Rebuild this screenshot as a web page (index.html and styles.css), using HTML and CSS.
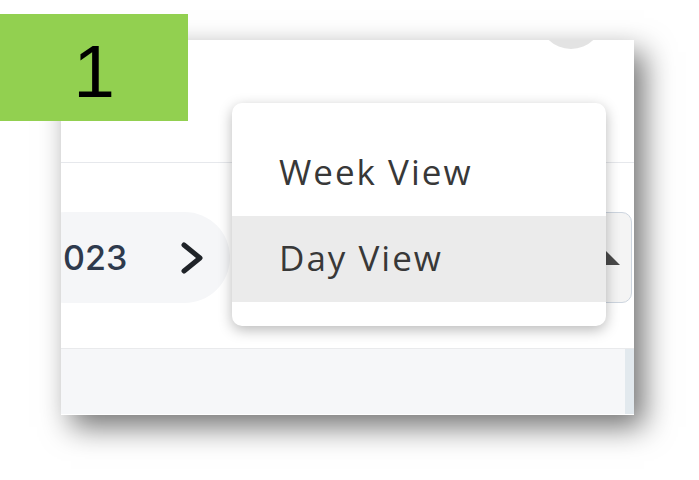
FILE: index.html
```html
<!doctype html>
<html lang="en">
  <head>
    <meta charset="UTF-8" />
    <meta name="viewport" content="width=device-width, initial-scale=1.0" />
    <title>Calendar view switcher</title>
    <link rel="stylesheet" href="styles.css">
  </head>
  <body>
    <div class="page">
      <div class="step-badge">1</div>

      <div class="shot">
        <div class="shot-header">
          <span class="avatar"></span>
        </div>

        <div class="toolbar">
          <div class="date-nav">
            <span class="date-label">023</span>
            <svg class="chevron" width="24" height="34" viewBox="0 0 24 34">
              <polyline points="4,4 20,17 4,30" />
            </svg>
          </div>
          <div class="view-select">
            <svg class="caret" width="28" height="14" viewBox="0 0 28 14">
              <polygon points="14,0 28,14 0,14" />
            </svg>
          </div>
        </div>

        <div class="grid-head"></div>

        <ul class="view-menu">
          <li>Week View</li>
          <li class="active">Day View</li>
        </ul>
      </div>
    </div>
  </body>
</html>
```

FILE: styles.css
```css
:root {
  --badge-green: #92d050;
  --line-color: #e6e8ec;
  --soft-bg: #f5f6f8;
  --menu-text: #383838;
  --hover-bg: #ebebeb;
}

body {
  margin: 0;
  background-color: #ffffff;
  font-family: "Open Sans", "Noto Sans", sans-serif;
}

.page {
  position: relative;
  width: 699px;
  height: 480px;
  padding: 40px 0 0 61px;
  box-sizing: border-box;
}

/* annotation label over the screenshot */
.step-badge {
  position: absolute;
  left: 0;
  top: 14px;
  z-index: 2;
  width: 188px;
  height: 107px;
  padding-top: 7px;
  box-sizing: border-box;
  background-color: var(--badge-green);
  font-family: "Liberation Sans", Arial, sans-serif;
  font-size: 75px;
  line-height: 100px;
  text-align: center;
  color: #000000;
}

.shot {
  position: relative;
  width: 573px;
  height: 375px;
  background-color: #ffffff;
  overflow: hidden;
  box-shadow: 10px 12px 28px rgba(0, 0, 0, 0.55);
}

.shot-header {
  display: flex;
  justify-content: flex-end;
  height: 122px;
  border-bottom: 1px solid var(--line-color);
}

.avatar {
  width: 64px;
  height: 64px;
  margin-top: -55px;
  margin-right: 31px;
  border-radius: 50%;
  background-color: #e3e3e3;
}

.toolbar {
  display: flex;
  align-items: flex-start;
  height: 186px;
  padding-top: 49px;
  box-sizing: border-box;
  border-bottom: 1px solid #e9eaec;
}

.date-nav {
  display: flex;
  align-items: center;
  height: 91px;
  margin-left: -40px;
  padding: 0 26px 0 42px;
  border-radius: 46px;
  background-color: var(--soft-bg);
}

.date-label {
  font-family: Inter, "Open Sans", sans-serif;
  font-size: 34px;
  font-weight: 500;
  color: #2e3a4d;
}

.chevron {
  margin-left: 53px;
}

.chevron polyline {
  fill: none;
  stroke: #1f2328;
  stroke-width: 5;
  stroke-linecap: round;
  stroke-linejoin: round;
}

.view-select {
  display: flex;
  align-items: center;
  justify-content: flex-end;
  width: 100px;
  height: 91px;
  margin-left: auto;
  margin-right: 2px;
  padding-right: 11px;
  box-sizing: border-box;
  border: 1px solid #cdd5df;
  border-radius: 10px;
  background-color: #f4f4f4;
}

.caret polygon {
  fill: #4a4a4a;
}

.grid-head {
  height: 65px;
  background-color: #f6f7f9;
  border-right: 9px solid #e2e9ee;
}

.view-menu {
  position: absolute;
  left: 171px;
  top: 63px;
  width: 374px;
  margin: 0;
  padding: 27px 0 24px;
  box-sizing: border-box;
  list-style: none;
  background-color: #ffffff;
  border-radius: 10px;
  box-shadow: 0 4px 14px rgba(0, 0, 0, 0.28);
}

.view-menu li {
  height: 86px;
  padding-left: 47px;
  font-size: 35px;
  line-height: 84px;
  letter-spacing: 2px;
  color: var(--menu-text);
}

.view-menu li.active {
  background-color: var(--hover-bg);
}
```
